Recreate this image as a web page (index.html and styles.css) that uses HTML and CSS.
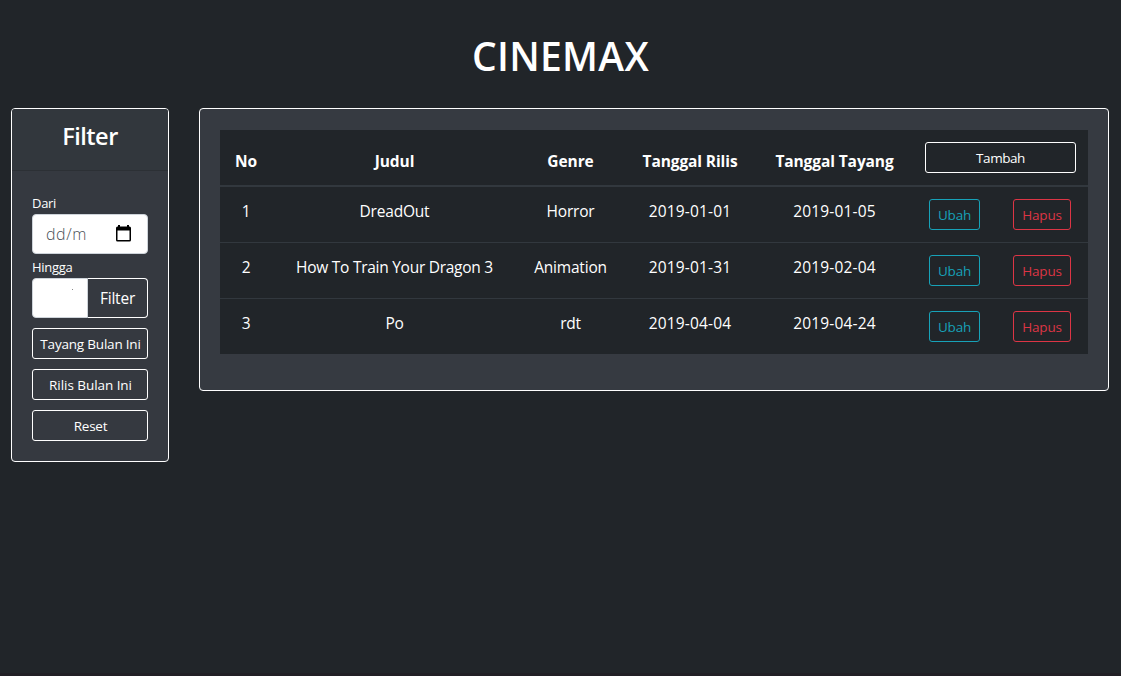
FILE: index.html
```html
<!DOCTYPE html>
<html lang="id">
<head>
<meta charset="utf-8">
<title>CINEMAX</title>
<link rel="stylesheet" href="styles.css">
</head>
<body>
<h1 class="title">CINEMAX</h1>
<main class="layout">
  <aside class="card filter">
    <h2 class="filter-head">Filter</h2>
    <div class="filter-body">
      <label class="label label-from">Dari</label>
      <div class="date">
        <span class="date-text">dd/m</span>
        <svg class="calendar" width="15" height="17" viewBox="0 0 15 17"><path fill="#000" fill-rule="evenodd" d="M2 0h2v1.500h7V0h2v1.500h.5A1.500 1.500 0 0 1 15 3v12a1.500 1.500 0 0 1-1.500 1.500h-12A1.500 1.500 0 0 1 0 15V3a1.500 1.500 0 0 1 1.500-1.500H2zM1.500 5.500V15h12V5.500z"/></svg>
      </div>
      <label class="label label-to">Hingga</label>
      <div class="group"><div class="group-input"><i class="speck"></i></div><button class="group-btn">Filter</button></div>
      <button class="btn">Tayang Bulan Ini</button>
      <button class="btn rilis">Rilis Bulan Ini</button>
      <button class="btn">Reset</button>
    </div>
  </aside>
  <section class="card content">
    <table class="films">
      <colgroup><col class="c-no"><col class="c-title"><col class="c-genre"><col class="c-release"><col class="c-show"><col></colgroup>
      <thead><tr><th>No</th><th>Judul</th><th>Genre</th><th>Tanggal Rilis</th><th>Tanggal Tayang</th><th class="add-cell"><button class="btn add">Tambah</button></th></tr></thead>
      <tbody>
        <tr><td>1</td><td>DreadOut</td><td>Horror</td><td class="day">2019-01-01</td><td class="day">2019-01-05</td><td class="act-cell"><div class="actions"><button class="btn edit">Ubah</button><button class="btn delete">Hapus</button></div></td></tr>
        <tr><td>2</td><td class="long">How To Train Your Dragon 3</td><td>Animation</td><td class="day">2019-01-31</td><td class="day">2019-02-04</td><td class="act-cell"><div class="actions"><button class="btn edit">Ubah</button><button class="btn delete">Hapus</button></div></td></tr>
        <tr><td>3</td><td>Po</td><td>rdt</td><td class="day">2019-04-04</td><td class="day">2019-04-24</td><td class="act-cell"><div class="actions"><button class="btn edit">Ubah</button><button class="btn delete">Hapus</button></div></td></tr>
      </tbody>
    </table>
  </section>
</main>
</body>
</html>
```
FILE: styles.css
```css
* { box-sizing: border-box; }
body {
  margin: 0;
  min-height: 676px;
  background: #212529;
  color: #fff;
  font: 15.5px/24px "Open Sans", "Noto Sans", sans-serif;
  letter-spacing: -0.2px;
  border-bottom: 3px solid #211f25;
  overflow: hidden;
}
.title { margin: 0; height: 108px; padding-top: 32px; text-align: center; font-size: 39px; line-height: 48px; font-weight: 600; letter-spacing: 0.3px; }
.layout { display: flex; align-items: flex-start; gap: 30px; padding: 0 12px 0 11px; }
.card { background: #343a40; border: 1px solid #fff; border-radius: 4px; }
.filter { width: 158px; height: 354px; background: #353940; }
.filter-head { margin: 0; height: 62px; padding-top: 13px; border-bottom: 1px solid #2c3035; border-radius: 3px 3px 0 0; text-align: center; font-size: 23.5px; line-height: 29px; font-weight: 600; letter-spacing: -0.5px; background: #32373d; }
.filter-body { padding: 21px 20px 0; display: flex; flex-direction: column; }
.label { font-size: 13px; line-height: 20px; letter-spacing: -0.3px; }
.label-from { height: 22px; padding-top: 1px; }
.label-to { height: 24px; padding-top: 3px; }
.date { display: flex; align-items: center; justify-content: space-between; height: 40px; padding: 0 16px 0 13px; background: #fff; border: 1px solid #ced4da; border-radius: 4px; color: #495057; }
.date-text { font-weight: 300; font-size: 16px; letter-spacing: 0.6px; }
.calendar { margin-bottom: 2px; }
.group { display: flex; height: 40px; margin-bottom: 10px; }
.group-input { width: 56px; background: #fff; border: 1px solid #ced4da; border-radius: 4px 0 0 4px; padding: 10px 0 0 39px; }
.speck { display: block; width: 1px; height: 1px; background: #888; }
.group-btn { flex: 1; padding: 0; background: transparent; border: 1px solid #fff; border-left: 0; border-radius: 0 4px 4px 0; color: #fff; font: inherit; letter-spacing: -0.2px; }
.btn { display: block; height: 31px; width: 100%; padding: 2px 0 0; border: 1px solid #fff; border-radius: 3px; background: transparent; color: #fff; font: 13.5px/21px "Open Sans", "Noto Sans", sans-serif; letter-spacing: -0.2px; white-space: nowrap; }
.filter-body .btn { margin-bottom: 10px; padding-left: 1px; }
.filter-body .rilis { letter-spacing: -0.05px; }
.add { letter-spacing: -0.45px; }
.content { width: 910px; height: 283px; padding: 21px 20px; background: #363a41; }
.films { width: 868px; table-layout: fixed; border-spacing: 0; background: #212529; text-align: center; }
.c-no { width: 52px; }
.c-title { width: 245px; }
.c-genre { width: 107px; }
.c-release { width: 132px; }
.c-show { width: 157px; }
th { height: 57px; padding: 19px 0 12px; border-bottom: 2px solid #32383e; font-weight: 700; letter-spacing: -0.1px; vertical-align: top; }
td { height: 56px; padding: 12px 0; border-top: 1px solid #32383e; vertical-align: top; white-space: nowrap; }
.day { letter-spacing: 0.15px; }
.long { letter-spacing: -0.27px; }
tbody tr:first-child td { height: 55px; border-top: 0; }
.add-cell { padding: 12px 12px 0; }
.act-cell { padding: 12px 17px 0 16px; }
.actions { display: flex; justify-content: space-between; }
.actions .edit { width: 51px; border-color: #17a2b8; color: #17a2b8; }
.actions .delete { width: 58px; border-color: #dc3545; color: #dc3545; }
```
